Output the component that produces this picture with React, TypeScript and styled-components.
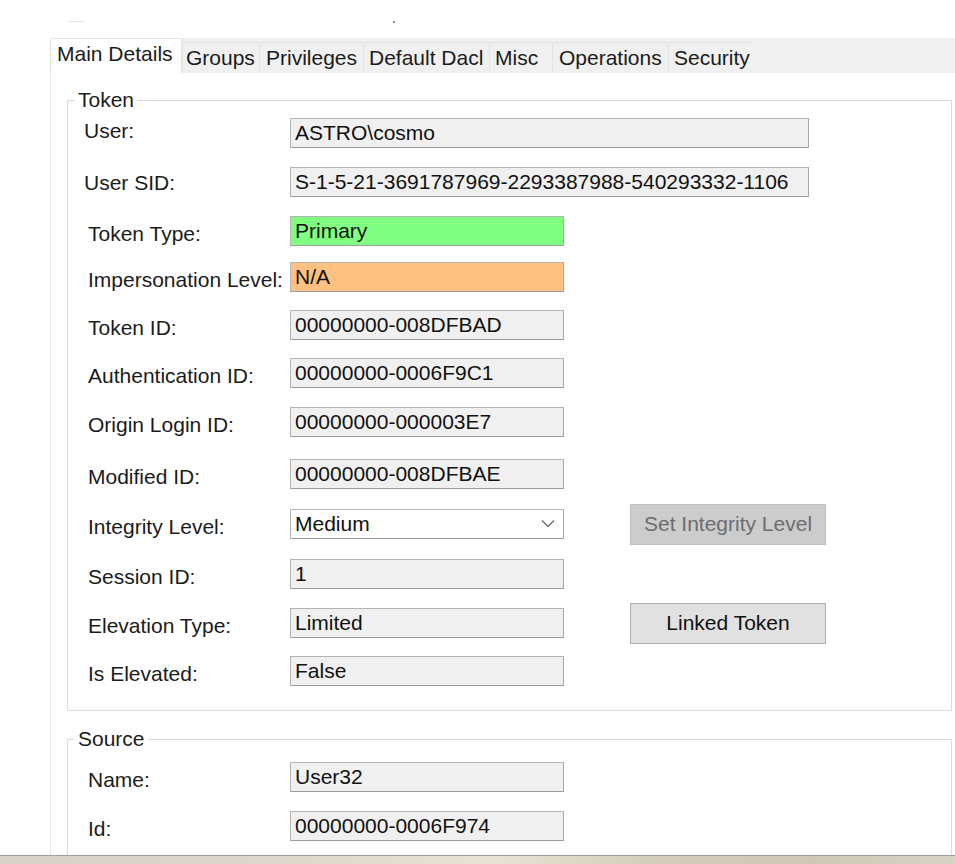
import React from "react";
import styled, { createGlobalStyle } from "styled-components";

const GlobalStyle = createGlobalStyle`
  html, body { margin: 0; padding: 0; background: #ffffff; }
  body { font-family: "Liberation Sans", Arial, sans-serif; }
`;

const Page = styled.div`
  width: 955px;
  height: 864px;
  overflow: hidden;
  display: flex;
  flex-direction: column;
  background: #ffffff;
  color: #1b1b1b;
  font-size: 21px;
`;

const TopStrip = styled.div`
  flex: none;
  height: 38px;
  box-sizing: border-box;
  padding-top: 21px;
  display: flex;
  align-items: flex-start;
`;

const FaintDash = styled.span`
  margin-left: 68px;
  width: 17px;
  height: 1px;
  background: #e4e4e4;
`;

const Dot = styled.span`
  margin-left: 308px;
  width: 2px;
  height: 2px;
  background: #8a8a8a;
`;

const TabStrip = styled.div`
  flex: none;
  height: 35px;
  margin-left: 50px;
  background: #f0f0f0;
  display: flex;
  align-items: flex-end;
`;

const Tab = styled.div<{ $w: number; $pl: number; $active?: boolean }>`
  flex: none;
  width: ${(p) => p.$w}px;
  height: ${(p) => (p.$active ? 35 : 31)}px;
  box-sizing: border-box;
  display: flex;
  align-items: center;
  justify-content: flex-start;
  padding-left: ${(p) => p.$pl}px;
  white-space: nowrap;
  font-size: 21px;
  color: #1b1b1b;
  background: ${(p) => (p.$active ? "#ffffff" : "#f0f0f0")};
  border-top: 1px solid ${(p) => (p.$active ? "#e6e6e6" : "#e4e4e4")};
  border-left: 1px solid ${(p) => (p.$active ? "#e6e6e6" : "#e4e4e4")};
  border-right: ${(p) => (p.$active ? "1px solid #e6e6e6" : "none")};
  padding-bottom: ${(p) => (p.$active ? 4 : 0)}px;
`;

const TabPage = styled.div`
  flex: 1;
  min-height: 0;
  margin-left: 50px;
  border-left: 1px solid #e8e8e8;
  padding: 15px 3px 0 16px;
  display: flex;
  flex-direction: column;
  gap: 16px;
  overflow: hidden;
`;

const GroupBox = styled.fieldset<{ $pb: number }>`
  flex: none;
  margin: 0;
  min-width: 0;
  padding: 0 0 ${(p) => p.$pb}px 0;
  border: 1px solid #dcdcdc;
`;

const Legend = styled.legend`
  margin-left: 7px;
  padding: 0 3px;
  font-size: 21px;
  line-height: 24px;
  color: #1b1b1b;
`;

const Row = styled.div<{ $mt: number }>`
  display: flex;
  align-items: center;
  height: 30px;
  margin-top: ${(p) => p.$mt}px;
`;

const Label = styled.div<{ $indent: number; $dy: number }>`
  flex: none;
  width: 222px;
  box-sizing: border-box;
  padding-left: ${(p) => p.$indent}px;
  padding-top: ${(p) => Math.max(0, p.$dy)}px;
  padding-bottom: ${(p) => Math.max(0, -p.$dy)}px;
  white-space: nowrap;
  font-size: 21px;
  color: #1b1b1b;
`;

const toneBg: Record<string, string> = {
  plain: "#f0f0f0",
  green: "#80ff80",
  orange: "#ffc080",
  white: "#ffffff",
};

const Field = styled.div<{ $w: number; $tone: string }>`
  flex: none;
  width: ${(p) => p.$w}px;
  height: 30px;
  box-sizing: border-box;
  border: 1px solid #b4b4b4;
  border-bottom-color: #9c9c9c;
  border-right-color: #a8a8a8;
  background: ${(p) => toneBg[p.$tone]};
  padding: 0 4px 1px 4px;
  display: flex;
  align-items: center;
  justify-content: space-between;
  font-size: 21px;
  color: #111111;
  white-space: nowrap;
  overflow: hidden;
`;

const Chevron = styled.svg`
  flex: none;
  margin-right: 4px;
`;

const Button = styled.button<{ $off?: boolean }>`
  flex: none;
  margin-left: 66px;
  width: 196px;
  height: 41px;
  box-sizing: border-box;
  padding: 0;
  font-family: "Liberation Sans", Arial, sans-serif;
  font-size: 21px;
  border: 1px solid ${(p) => (p.$off ? "#bfbfbf" : "#adadad")};
  background: ${(p) => (p.$off ? "#cccccc" : "#e1e1e1")};
  color: ${(p) => (p.$off ? "#6d6d6d" : "#111111")};
`;

const BottomStrip = styled.div`
  flex: none;
  height: 8px;
  border-top: 1px solid #a39f95;
  background: linear-gradient(
    90deg,
    #d6d2c8 0%,
    #ddd8cc 30%,
    #e7e2d3 52%,
    #d4cdbd 68%,
    #cfc8b8 85%,
    #d8d2c4 100%
  );
`;

type Item = {
  label: string;
  value: string;
  mt: number;
  w?: number;
  tone?: string;
  indent?: number;
  dy?: number;
  combo?: boolean;
  button?: { text: string; off?: boolean };
};

const tokenRows: Item[] = [
  { label: "User:", value: "ASTRO\\cosmo", mt: 6, w: 519, indent: 16, dy: -5 },
  { label: "User SID:", value: "S-1-5-21-3691787969-2293387988-540293332-1106", mt: 19, w: 519, indent: 16, dy: 1 },
  { label: "Token Type:", value: "Primary", mt: 19, tone: "green" },
  { label: "Impersonation Level:", value: "N/A", mt: 16, tone: "orange" },
  { label: "Token ID:", value: "00000000-008DFBAD", mt: 18 },
  { label: "Authentication ID:", value: "00000000-0006F9C1", mt: 18 },
  { label: "Origin Login ID:", value: "00000000-000003E7", mt: 19 },
  { label: "Modified ID:", value: "00000000-008DFBAE", mt: 22 },
  {
    label: "Integrity Level:",
    value: "Medium",
    mt: 20,
    tone: "white",
    combo: true,
    button: { text: "Set Integrity Level", off: true },
  },
  { label: "Session ID:", value: "1", mt: 20 },
  { label: "Elevation Type:", value: "Limited", mt: 19, button: { text: "Linked Token" } },
  { label: "Is Elevated:", value: "False", mt: 18 },
];

const sourceRows: Item[] = [
  { label: "Name:", value: "User32", mt: 11 },
  { label: "Id:", value: "00000000-0006F974", mt: 19 },
];

const tabs = [
  { name: "Main Details", w: 132, pl: 6, active: true },
  { name: "Groups", w: 77, pl: 3 },
  { name: "Privileges", w: 104, pl: 6 },
  { name: "Default Dacl", w: 126, pl: 5 },
  { name: "Misc", w: 63, pl: 5 },
  { name: "Operations", w: 116, pl: 6 },
  { name: "Security", w: 84, pl: 5 },
];

function FieldRow({ item }: { item: Item }) {
  return (
    <Row $mt={item.mt}>
      <Label $indent={item.indent ?? 20} $dy={item.dy ?? 5}>
        {item.label}
      </Label>
      <Field $w={item.w ?? 274} $tone={item.tone ?? "plain"}>
        <span>{item.value}</span>
        {item.combo && (
          <Chevron width="14" height="9" viewBox="0 0 14 9">
            <polyline points="1,1.5 7,7.5 13,1.5" fill="none" stroke="#606060" strokeWidth="1.2" />
          </Chevron>
        )}
      </Field>
      {item.button && <Button $off={item.button.off}>{item.button.text}</Button>}
    </Row>
  );
}

export default function App() {
  return (
    <>
      <GlobalStyle />
      <Page>
        <TopStrip>
          <FaintDash />
          <Dot />
        </TopStrip>
        <TabStrip>
          {tabs.map((t) => (
            <Tab key={t.name} $w={t.w} $pl={t.pl} $active={t.active}>
              {t.name}
            </Tab>
          ))}
        </TabStrip>
        <TabPage>
          <GroupBox $pb={24}>
            <Legend>Token</Legend>
            {tokenRows.map((r) => (
              <FieldRow key={r.label} item={r} />
            ))}
          </GroupBox>
          <GroupBox $pb={40}>
            <Legend>Source</Legend>
            {sourceRows.map((r) => (
              <FieldRow key={r.label} item={r} />
            ))}
          </GroupBox>
        </TabPage>
        <BottomStrip />
      </Page>
    </>
  );
}
